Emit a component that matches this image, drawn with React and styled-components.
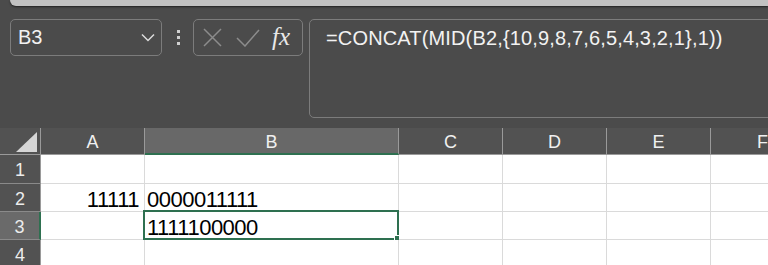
import React from "react";
import styled, { createGlobalStyle } from "styled-components";

const GlobalStyle = createGlobalStyle`
  html, body {
    margin: 0;
    padding: 0;
    background: #4b4b4b;
    overflow: hidden;
  }
  * {
    box-sizing: border-box;
  }
`;

const columns = ["A", "B", "C", "D", "E", "F"];

const cells = {
  "A2": { text: "11111", align: "right" },
  "B2": { text: "0000011111", align: "left" },
  "B3": { text: "1111100000", align: "left" },
};

const App = () => {
  const active = { col: "B", row: 3 };

  return (
    <>
      <GlobalStyle />
      <Screen>
        <TopStrip />

        {/* NOTE 이름 상자 + 수식 입력줄 */}
        <Toolbar>
          <NameBox>
            <NameText>B3</NameText>
            <svg width="14" height="9" viewBox="0 0 14 9">
              <polyline
                points="1,1.5 7,7.5 13,1.5"
                fill="none"
                stroke="#dcdcdc"
                strokeWidth="1.5"
              />
            </svg>
          </NameBox>

          <Dots>
            <Dot />
            <Dot />
            <Dot />
          </Dots>

          <FuncBox>
            <svg width="19" height="19" viewBox="0 0 19 19">
              <path
                d="M1 1 L18 18 M18 1 L1 18"
                stroke="#8c8c8c"
                strokeWidth="1.5"
                fill="none"
              />
            </svg>
            <svg width="24" height="18" viewBox="0 0 24 18">
              <polyline
                points="1,9 9,17 23,1"
                stroke="#8c8c8c"
                strokeWidth="1.5"
                fill="none"
              />
            </svg>
            <Fx>fx</Fx>
          </FuncBox>

          <FormulaBox>=CONCAT(MID(B2,{"{"}10,9,8,7,6,5,4,3,2,1{"}"},1))</FormulaBox>
        </Toolbar>

        {/* NOTE 시트 그리드 */}
        <Sheet>
          <Corner>
            <svg width="21" height="20" viewBox="0 0 21 20">
              <polygon points="21,0 21,20 0,20" fill="#d6d6d6" />
            </svg>
          </Corner>
          {columns.map((c) => (
            <ColHeader key={c} $active={c === active.col}>
              {c}
            </ColHeader>
          ))}

          {[1, 2, 3, 4].map((r) => (
            <React.Fragment key={r}>
              <RowHeader $active={r === active.row}>{r}</RowHeader>
              {columns.map((c) => {
                const cell = cells[c + r];
                const isActive = c === active.col && r === active.row;
                return (
                  <Cell key={c + r} $align={cell ? cell.align : "left"}>
                    {cell && cell.text}
                    {isActive && (
                      <Selection>
                        <FillHandle />
                      </Selection>
                    )}
                  </Cell>
                );
              })}
            </React.Fragment>
          ))}
        </Sheet>
      </Screen>
    </>
  );
};

const Screen = styled.div`
  width: 768px;
  height: 265px;
  overflow: hidden;
  background: #4b4b4b;
  font-family: "Liberation Sans", Arial, sans-serif;
`;

const TopStrip = styled.div`
  height: 6px;
  margin-left: 10px;
  background: #c2c2c2;
  border-bottom-left-radius: 9px;
  box-shadow: 0 1px 2px rgba(0, 0, 0, 0.55);
`;

const Toolbar = styled.div`
  display: flex;
  align-items: flex-start;
  height: 122px;
  padding: 13px 0 0 10px;
`;

const NameBox = styled.div`
  display: flex;
  align-items: center;
  justify-content: space-between;
  width: 152px;
  height: 37px;
  padding: 0 6px 0 7px;
  border: 1px solid #7c7c7c;
  border-radius: 5px;
`;

const NameText = styled.span`
  color: #f2f2f2;
  font-size: 20px;
`;

const Dots = styled.div`
  display: flex;
  flex-direction: column;
  justify-content: center;
  gap: 3px;
  height: 37px;
  margin: 0 13px 0 15px;
`;

const Dot = styled.div`
  width: 3px;
  height: 3px;
  background: #d0d0d0;
`;

const FuncBox = styled.div`
  display: flex;
  align-items: center;
  width: 110px;
  height: 37px;
  padding: 0 0 0 9px;
  gap: 14px;
  border: 1px solid #7c7c7c;
  border-radius: 5px;
`;

const Fx = styled.span`
  color: #e8e8e8;
  font-family: "Liberation Serif", "Times New Roman", serif;
  font-style: italic;
  font-size: 25px;
  margin-left: -2px;
  margin-top: -2px;
`;

const FormulaBox = styled.div`
  flex: 1;
  height: 99px;
  margin-left: 6px;
  margin-right: -12px;
  padding: 7px 16px;
  border: 1px solid #7c7c7c;
  border-radius: 5px;
  color: #f2f2f2;
  font-size: 20px;
  letter-spacing: 0.15px;
  white-space: nowrap;
`;

const Sheet = styled.div`
  display: grid;
  grid-template-columns: 41px 104px 254px 104px 104px 104px 104px;
  grid-template-rows: 27px 29px 28px 28px 28px;
  width: 815px;
`;

const Corner = styled.div`
  display: flex;
  align-items: flex-end;
  justify-content: flex-end;
  padding: 0 3px 2px 0;
  background: #525252;
  border-right: 1px solid #9a9a9a;
  border-bottom: 1px solid #9a9a9a;
`;

const ColHeader = styled.div`
  display: flex;
  align-items: center;
  justify-content: center;
  padding-top: 3px;
  background: ${(p) => (p.$active ? "#686868" : "#525252")};
  color: #f0f0f0;
  font-size: 18px;
  border-right: 1px solid #9a9a9a;
  border-bottom: ${(p) => (p.$active ? "2px solid #2e7050" : "1px solid #9a9a9a")};
`;

const RowHeader = styled.div`
  display: flex;
  align-items: center;
  justify-content: center;
  padding-top: 3px;
  background: ${(p) => (p.$active ? "#6a6a6a" : "#525252")};
  color: #ececec;
  font-size: 18px;
  border-bottom: 1px solid #8a8a8a;
  border-right: ${(p) => (p.$active ? "2px solid #2e7050" : "1px solid #9a9a9a")};
`;

const Cell = styled.div`
  position: relative;
  display: flex;
  align-items: flex-end;
  justify-content: ${(p) => (p.$align === "right" ? "flex-end" : "flex-start")};
  padding: ${(p) => (p.$align === "right" ? "0 5px 0 2px" : "0 2px")};
  background: #ffffff;
  color: #000000;
  font-size: 22px;
  letter-spacing: -0.5px;
  line-height: 1;
  white-space: nowrap;
  border-right: 1px solid #dadada;
  border-bottom: 1px solid #dadada;
`;

const Selection = styled.div`
  position: absolute;
  top: -2px;
  left: -2px;
  right: -1px;
  bottom: -1px;
  border: 2px solid #2e7050;
  pointer-events: none;
`;

const FillHandle = styled.div`
  position: absolute;
  right: -5px;
  bottom: -5px;
  width: 8px;
  height: 8px;
  background: #2e7050;
  border: 1px solid #ffffff;
`;

export default App;
